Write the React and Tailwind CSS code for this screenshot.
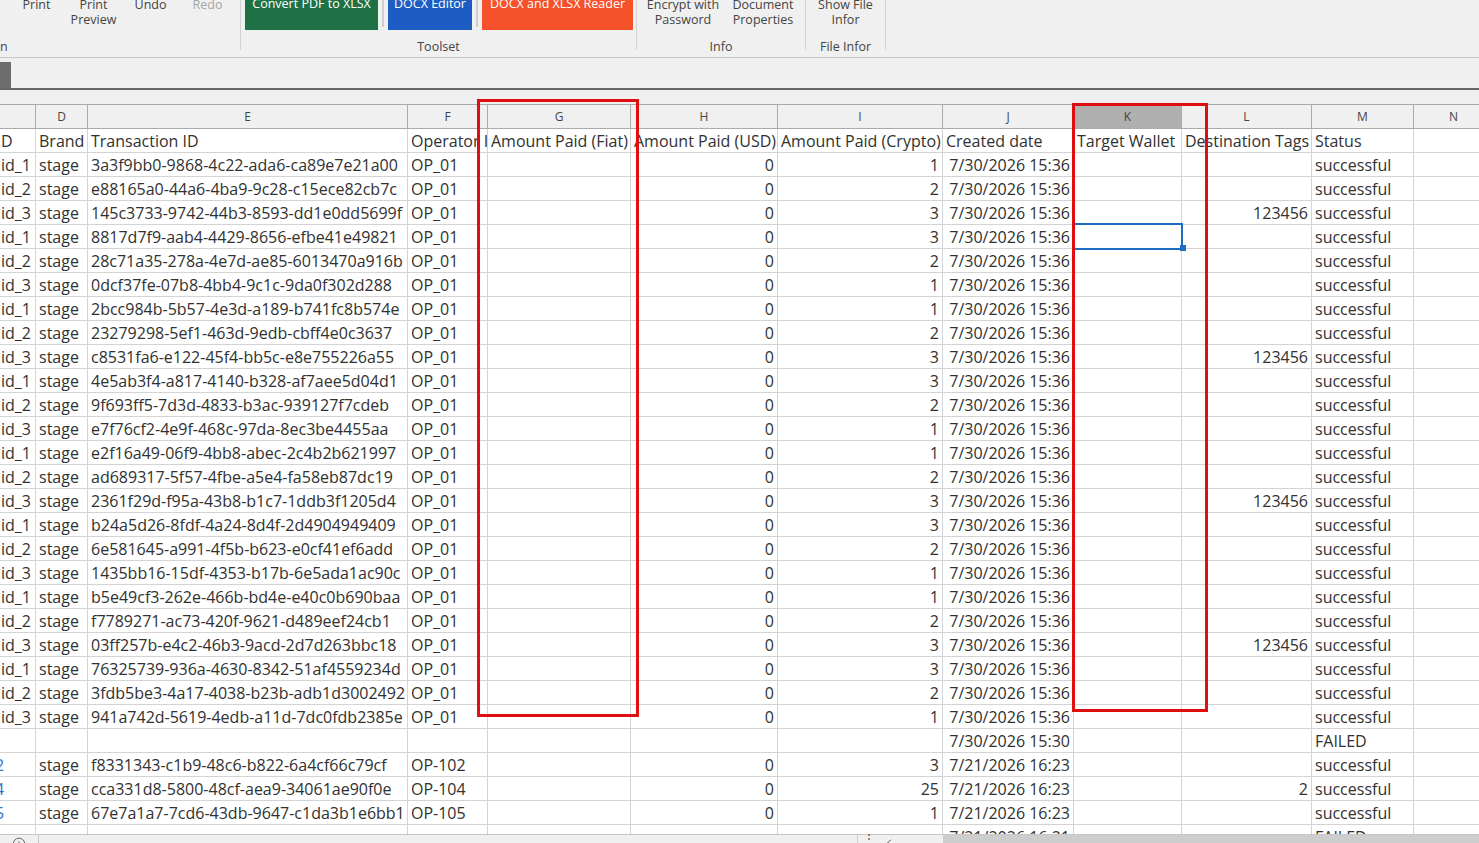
import React from 'react';
import { CirclePlus, ChevronLeft } from 'lucide-react';

// spreadsheet viewer — ribbon, grid and the two annotation boxes

const COLS = [
  { key: 'c', w: 'w-[36px]', letter: '' },
  { key: 'd', w: 'w-[52px]', letter: 'D' },
  { key: 'e', w: 'w-[320px]', letter: 'E' },
  { key: 'f', w: 'w-[80px]', letter: 'F' },
  { key: 'g', w: 'w-[143px]', letter: 'G' },
  { key: 'h', w: 'w-[147px]', letter: 'H', right: true },
  { key: 'i', w: 'w-[165px]', letter: 'I', right: true },
  { key: 'j', w: 'w-[131px]', letter: 'J', right: true },
  { key: 'k', w: 'w-[108px]', letter: 'K', active: true },
  { key: 'l', w: 'w-[130px]', letter: 'L', right: true },
  { key: 'm', w: 'w-[102px]', letter: 'M' },
  { key: 'n', w: 'w-[80px]', letter: 'N' },
];

const HEAD = {
  head: true,
  c: 'D', d: 'Brand', e: 'Transaction ID', f: 'Operator ID', g: 'Amount Paid (Fiat)',
  h: 'Amount Paid (USD)', i: 'Amount Paid (Crypto)', j: 'Created date', k: 'Target Wallet',
  l: 'Destination Tags', m: 'Status', n: '',
};

const std = (c, e, i, l = '') => ({
  c, d: 'stage', e, f: 'OP_01', h: '0', i, j: '7/30/2026 15:36', l, m: 'successful',
});

const ROWS = [
  HEAD,
  std('id_1', '3a3f9bb0-9868-4c22-ada6-ca89e7e21a00', '1'),
  std('id_2', 'e88165a0-44a6-4ba9-9c28-c15ece82cb7c', '2'),
  std('id_3', '145c3733-9742-44b3-8593-dd1e0dd5699f', '3', '123456'),
  std('id_1', '8817d7f9-aab4-4429-8656-efbe41e49821', '3'),
  std('id_2', '28c71a35-278a-4e7d-ae85-6013470a916b', '2'),
  std('id_3', '0dcf37fe-07b8-4bb4-9c1c-9da0f302d288', '1'),
  std('id_1', '2bcc984b-5b57-4e3d-a189-b741fc8b574e', '1'),
  std('id_2', '23279298-5ef1-463d-9edb-cbff4e0c3637', '2'),
  std('id_3', 'c8531fa6-e122-45f4-bb5c-e8e755226a55', '3', '123456'),
  std('id_1', '4e5ab3f4-a817-4140-b328-af7aee5d04d1', '3'),
  std('id_2', '9f693ff5-7d3d-4833-b3ac-939127f7cdeb', '2'),
  std('id_3', 'e7f76cf2-4e9f-468c-97da-8ec3be4455aa', '1'),
  std('id_1', 'e2f16a49-06f9-4bb8-abec-2c4b2b621997', '1'),
  std('id_2', 'ad689317-5f57-4fbe-a5e4-fa58eb87dc19', '2'),
  std('id_3', '2361f29d-f95a-43b8-b1c7-1ddb3f1205d4', '3', '123456'),
  std('id_1', 'b24a5d26-8fdf-4a24-8d4f-2d4904949409', '3'),
  std('id_2', '6e581645-a991-4f5b-b623-e0cf41ef6add', '2'),
  std('id_3', '1435bb16-15df-4353-b17b-6e5ada1ac90c', '1'),
  std('id_1', 'b5e49cf3-262e-466b-bd4e-e40c0b690baa', '1'),
  std('id_2', 'f7789271-ac73-420f-9621-d489eef24cb1', '2'),
  std('id_3', '03ff257b-e4c2-46b3-9acd-2d7d263bbc18', '3', '123456'),
  std('id_1', '76325739-936a-4630-8342-51af4559234d', '3'),
  std('id_2', '3fdb5be3-4a17-4038-b23b-adb1d3002492', '2'),
  std('id_3', '941a742d-5619-4edb-a11d-7dc0fdb2385e', '1'),
  { j: '7/30/2026 15:30', m: 'FAILED' },
  { c: '2', link: true, d: 'stage', e: 'f8331343-c1b9-48c6-b822-6a4cf66c79cf', f: 'OP-102', h: '0', i: '3', j: '7/21/2026 16:23', m: 'successful' },
  { c: '4', link: true, d: 'stage', e: 'cca331d8-5800-48cf-aea9-34061ae90f0e', f: 'OP-104', h: '0', i: '25', j: '7/21/2026 16:23', l: '2', m: 'successful' },
  { c: '5', link: true, d: 'stage', e: '67e7a1a7-7cd6-43db-9647-c1da3b1e6bb1', f: 'OP-105', h: '0', i: '1', j: '7/21/2026 16:23', m: 'successful' },
  { j: '7/21/2026 16:21', m: 'FAILED' },
];

function RibbonItem({ lines, dim }) {
  return (
    <div className={`w-[57px] text-center leading-[15px] ${dim ? 'text-[#a6a6a6]' : 'text-[#444]'}`}>
      {lines.map((l) => <div key={l}>{l}</div>)}
    </div>
  );
}

function Group({ w, label, labelLeft, children }) {
  return (
    <div className={`${w} h-[50px] shrink-0 border-r border-[#d2d2d2] flex flex-col`}>
      <div className="h-[42px] shrink-0 -mt-[3px] flex items-start">{children}</div>
      <div className={`shrink-0 leading-[15px] text-[#444] ${labelLeft ? 'text-left' : 'text-center'}`}>{label}</div>
    </div>
  );
}

function Ribbon() {
  return (
    <div className="h-[58px] border-b border-[#c8c8c8] flex text-[12.5px] overflow-hidden">
      <Group w="w-[241px]" label="n" labelLeft>
        <div className="flex pl-[8px]">
          <RibbonItem lines={['Print']} />
          <RibbonItem lines={['Print', 'Preview']} />
          <RibbonItem lines={['Undo']} />
          <RibbonItem lines={['Redo']} dim />
        </div>
      </Group>
      <Group w="w-[396px]" label="Toolset">
        <div className="flex items-start pl-[4px]">
          <div className="w-[133px] h-[52px] -mt-[19px] bg-[#1e7145] text-white flex items-center justify-center">Convert PDF to XLSX</div>
          <div className="w-[2px] h-[27px] mt-[3px] mx-[4px] bg-[#cdcdcd]" />
          <div className="w-[84px] h-[52px] -mt-[19px] bg-[#1d5cc2] text-white flex items-center justify-center">DOCX Editor</div>
          <div className="w-[2px] h-[27px] mt-[3px] mx-[4px] bg-[#cdcdcd]" />
          <div className="w-[151px] h-[52px] -mt-[19px] bg-[#f5512a] text-white flex items-center justify-center whitespace-nowrap">DOCX and XLSX Reader</div>
        </div>
      </Group>
      <Group w="w-[169px]" label="Info">
        <div className="flex pl-[6px] text-[#444] leading-[15px] text-center">
          <div className="w-[80px]"><div>Encrypt with</div><div>Password</div></div>
          <div className="w-[80px]"><div>Document</div><div>Properties</div></div>
        </div>
      </Group>
      <Group w="w-[80px]" label="File Infor">
        <div className="w-full text-[#444] leading-[15px] text-center">
          <div>Show File</div><div>Infor</div>
        </div>
      </Group>
    </div>
  );
}

function Cell({ col, row }) {
  const v = row[col.key] || '';
  const right = col.right && !row.head;
  const pad = col.key === 'c' ? 'pl-[1px]' : right ? 'justify-end pr-[3px]' : 'pl-[3px]';
  return (
    <div className={`${col.w} shrink-0 h-full border-r border-[#d4d4d4] flex items-center overflow-hidden whitespace-nowrap ${pad}`}>
      {col.key === 'c' && row.link ? (
        <span className="-ml-[6px] text-[#2f75c8]">{v}</span>
      ) : (
        <span>{v}</span>
      )}
    </div>
  );
}

export default function App() {
  return (
    <div className="relative w-[1479px] h-[843px] overflow-hidden bg-[#f0f0f0] font-['Open_Sans','Noto_Sans',sans-serif]">
      <Ribbon />

      {/* sheet tab strip */}
      <div className="h-[30px] pt-[4px]">
        <div className="w-[11px] h-[26px] bg-[#6d6d6d]" />
      </div>
      <div className="h-[2px] bg-[#666]" />
      <div className="h-[14px]" />

      {/* column letters */}
      <div className="h-[25px] flex overflow-hidden border-t border-b border-[#ababab] text-[12px] text-[#444]">
        {COLS.map((col) => (
          <div key={col.key}
            className={`${col.w} shrink-0 h-full border-r border-[#ababab] flex items-center justify-center ${col.active ? 'bg-[#b0b0b0]' : ''}`}>
            {col.letter}
          </div>
        ))}
      </div>

      {/* cells */}
      <div className="h-[705px] overflow-hidden bg-white text-[16px] text-[#313131]">
        {ROWS.map((row, ri) => (
          <div key={ri} className="h-[24px] flex border-b border-[#d4d4d4]">
            {COLS.map((col) => <Cell key={col.key} col={col} row={row} />)}
          </div>
        ))}
      </div>

      {/* bottom: sheet add + horizontal scrollbar */}
      <div className="h-[20px] flex border-t border-[#c6c6c6] text-[#555]">
        <div className="w-[39px] shrink-0 border-r border-[#c6c6c6] flex justify-center pt-[2px]">
          <CirclePlus size={14} strokeWidth={1.5} />
        </div>
        <div className="w-[819px] shrink-0 border-r border-[#d0d0d0]" />
        <div className="w-[85px] shrink-0 flex items-start pl-[5px] gap-[8px] text-[12px] leading-none">
          <span className="-mt-[2px]">⋮</span>
          <ChevronLeft size={12} className="mt-[2px]" />
        </div>
        <div className="flex-1 bg-[#cdcdcd]" />
      </div>

      {/* selected cell K5 */}
      <div className="absolute left-[1073px] top-[223px] w-[110px] h-[27px] border-2 border-[#1b6ec2]" />
      <div className="absolute left-[1180px] top-[245px] w-[6px] h-[6px] bg-[#1b6ec2]" />

      {/* annotation boxes */}
      <div className="absolute left-[477px] top-[99px] w-[162px] h-[618px] border-[3px] border-[#e00f0f]" />
      <div className="absolute left-[1072px] top-[103px] w-[136px] h-[609px] border-[3px] border-[#e00f0f]" />
    </div>
  );
}
